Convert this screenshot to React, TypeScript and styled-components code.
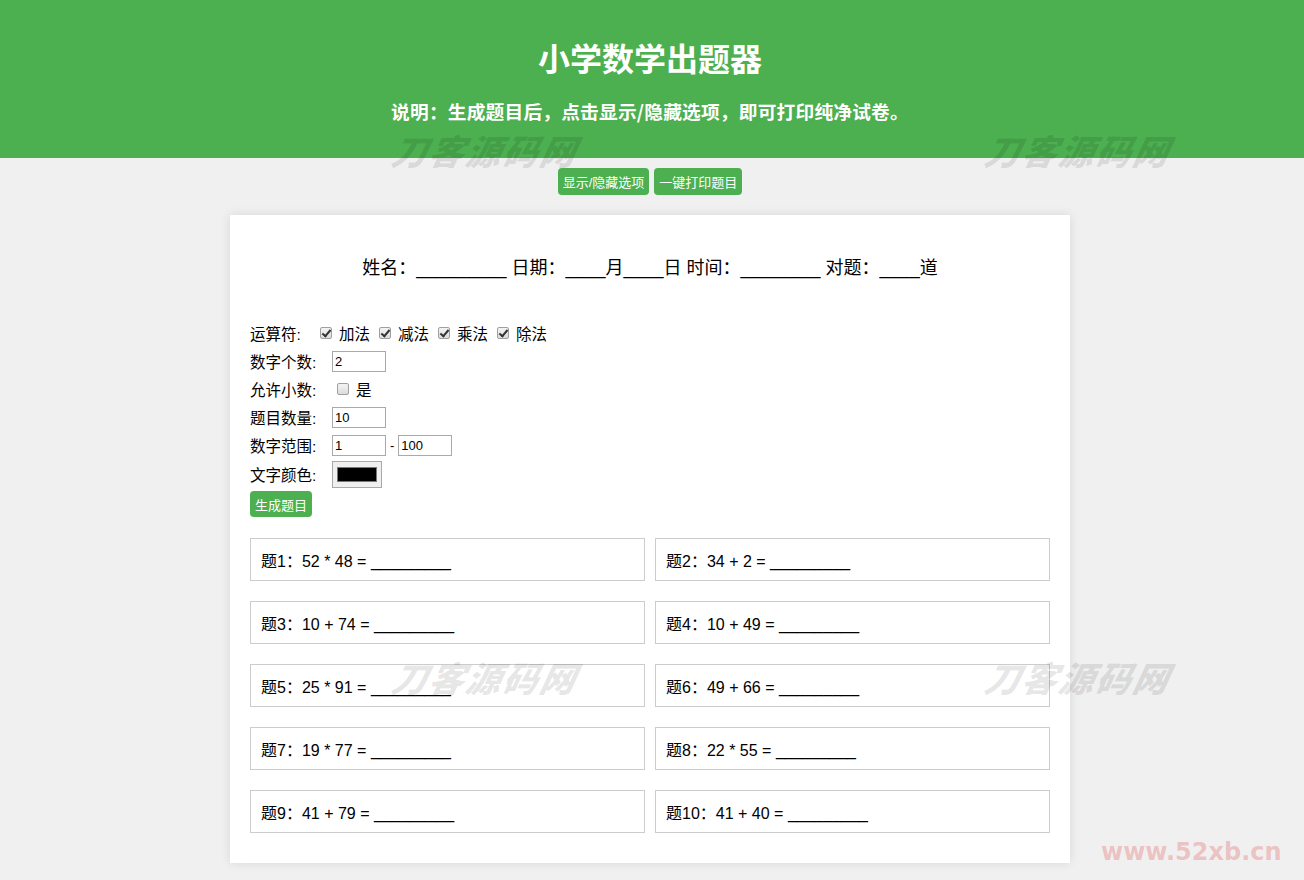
import React from "react";
import styled, { createGlobalStyle } from "styled-components";

const problems = [
  "52 * 48",
  "34 + 2",
  "10 + 74",
  "10 + 49",
  "25 * 91",
  "49 + 66",
  "19 * 77",
  "22 * 55",
  "41 + 79",
  "41 + 40",
];

const operators = ["加法", "减法", "乘法", "除法"];

const marks = [
  { left: 393, top: 124 },
  { left: 986, top: 124 },
  { left: 393, top: 651 },
  { left: 986, top: 651 },
];

const GlobalStyle = createGlobalStyle`
  html, body {
    margin: 0;
    padding: 0;
    background: #f0f0f0;
  }
  body {
    font-family: "Liberation Sans", Arial, "Noto Sans CJK SC", sans-serif;
    color: #000;
  }
`;

const App = () => {
  return (
    <Page>
      <GlobalStyle />
      <Header>
        <Title>小学数学出题器</Title>
        <Subtitle>说明：生成题目后，点击显示/隐藏选项，即可打印纯净试卷。</Subtitle>
      </Header>

      <Content>
        <Toolbar>
          <GreenButton>显示/隐藏选项</GreenButton>
          <GreenButton>一键打印题目</GreenButton>
        </Toolbar>

        <Sheet>
          <InfoLine>
            姓名：_________ 日期：____月____日 时间：________ 对题：____道
          </InfoLine>

          <Options>
            <Row>
              <Label $w={70}>运算符:</Label>
              {operators.map((op) => (
                <CheckItem key={op}>
                  <Check type="checkbox" defaultChecked />
                  <span>{op}</span>
                </CheckItem>
              ))}
            </Row>
            <Row>
              <Label>数字个数:</Label>
              <NumInput defaultValue="2" />
            </Row>
            <Row>
              <Label $w={87}>允许小数:</Label>
              <CheckItem>
                <Check type="checkbox" />
                <span>是</span>
              </CheckItem>
            </Row>
            <Row>
              <Label>题目数量:</Label>
              <NumInput defaultValue="10" />
            </Row>
            <Row>
              <Label>数字范围:</Label>
              <NumInput defaultValue="1" />
              <Dash>-</Dash>
              <NumInput defaultValue="100" />
            </Row>
            <Row $h={30}>
              <Label>文字颜色:</Label>
              <ColorInput type="color" defaultValue="#000000" />
            </Row>
            <SmallButton>生成题目</SmallButton>
          </Options>

          <ProblemGrid>
            {problems.map((p, i) => (
              <ProblemBox key={i}>
                题{i + 1}：{p} = _________
              </ProblemBox>
            ))}
          </ProblemGrid>
        </Sheet>
      </Content>

      {marks.map((m, i) => (
        <Watermark key={i} style={{ left: m.left, top: m.top }}>
          刀客源码网
        </Watermark>
      ))}
      <SiteMark>www.52xb.cn</SiteMark>
    </Page>
  );
};

const Page = styled.div`
  position: relative;
  min-height: 880px;
  overflow: hidden;
`;

const Header = styled.header`
  background: #4caf50;
  color: #fff;
  text-align: center;
  padding: 38px 4px 35px 0;
  height: 158px;
  box-sizing: border-box;
`;

const Title = styled.h1`
  margin: 0;
  font-size: 32px;
  line-height: 38px;
  font-weight: bold;
  font-family: "Noto Sans CJK SC", sans-serif;
`;

const Subtitle = styled.h3`
  margin: 23px 0 0;
  font-size: 18.72px;
  line-height: 24px;
  font-weight: bold;
  letter-spacing: 0.2px;
  font-family: "Noto Sans CJK SC", sans-serif;
`;

const Content = styled.div`
  padding-right: 4px;
`;

const Toolbar = styled.div`
  display: flex;
  justify-content: center;
  gap: 5px;
  margin-top: 10px;
`;

const GreenButton = styled.button`
  background: #4caf50;
  color: #fff;
  border: none;
  border-radius: 4px;
  height: 27px;
  padding: 0 5px;
  font-size: 13px;
  font-family: "Liberation Sans", "Noto Sans CJK SC", sans-serif;
  cursor: pointer;
`;

const SmallButton = styled(GreenButton)`
  height: 26px;
  margin-top: 2px;
  align-self: flex-start;
`;

const Sheet = styled.main`
  width: 840px;
  box-sizing: border-box;
  margin: 20px auto 0;
  background: #fff;
  padding: 20px 20px 30px;
  box-shadow: 0 0 10px rgba(0, 0, 0, 0.1);
`;

const InfoLine = styled.div`
  text-align: center;
  font-size: 18px;
  line-height: 26px;
  margin: 20px 0 38px;
`;

const Options = styled.div`
  display: flex;
  flex-direction: column;
  font-size: 15.5px;
`;

const Row = styled.div<{ $h?: number }>`
  display: flex;
  align-items: center;
  height: ${(p) => p.$h ?? 28}px;
`;

const Label = styled.span<{ $w?: number }>`
  width: ${(p) => p.$w ?? 82}px;
  flex-shrink: 0;
`;

const CheckItem = styled.label`
  display: inline-flex;
  align-items: center;
  gap: 7px;
  margin-right: 9px;
`;

const Check = styled.input`
  appearance: none;
  margin: 0;
  width: 12px;
  height: 12px;
  border: 1px solid #a0a0a0;
  border-radius: 2px;
  background: linear-gradient(#f4f4f4, #dcdcdc);
  position: relative;

  &:checked::after {
    content: "";
    position: absolute;
    left: 3px;
    top: 0px;
    width: 3px;
    height: 7px;
    border: solid #333;
    border-width: 0 2px 2px 0;
    transform: rotate(40deg);
  }
`;

const NumInput = styled.input`
  width: 54px;
  height: 21px;
  box-sizing: border-box;
  border: 1px solid #a9a9a9;
  padding: 1px 2px;
  font-size: 13px;
  font-family: "Liberation Sans", Arial, sans-serif;
  margin: 0;
`;

const Dash = styled.span`
  font-size: 13px;
  margin: 0 4px;
`;

const ColorInput = styled.input`
  width: 50px;
  height: 27px;
  box-sizing: border-box;
  margin: 0;
  padding: 0;
  border: 1px solid #a9a9a9;
  background: #efefef;
  cursor: pointer;

  &::-webkit-color-swatch-wrapper {
    padding: 5px 4px;
  }
  &::-webkit-color-swatch {
    border: 1px solid #777;
    border-radius: 0;
  }
`;

const ProblemGrid = styled.div`
  display: grid;
  grid-template-columns: 1fr 1fr;
  column-gap: 10px;
  row-gap: 20px;
  margin-top: 21px;
`;

const ProblemBox = styled.div`
  height: 43px;
  box-sizing: border-box;
  border: 1px solid #ccc;
  padding: 0 10px;
  display: flex;
  align-items: center;
  font-size: 16px;
`;

const Watermark = styled.div`
  position: absolute;
  font-family: "Noto Sans CJK SC", sans-serif;
  font-weight: 900;
  font-style: italic;
  font-size: 35px;
  letter-spacing: 2px;
  color: rgba(0, 0, 0, 0.1);
  transform: skewX(-12deg);
  pointer-events: none;
  white-space: nowrap;
`;

const SiteMark = styled.div`
  position: absolute;
  left: 1101px;
  top: 838px;
  font-family: "DejaVu Sans", sans-serif;
  font-weight: bold;
  font-size: 24px;
  color: rgba(225, 80, 80, 0.3);
  pointer-events: none;
`;

export default App;
